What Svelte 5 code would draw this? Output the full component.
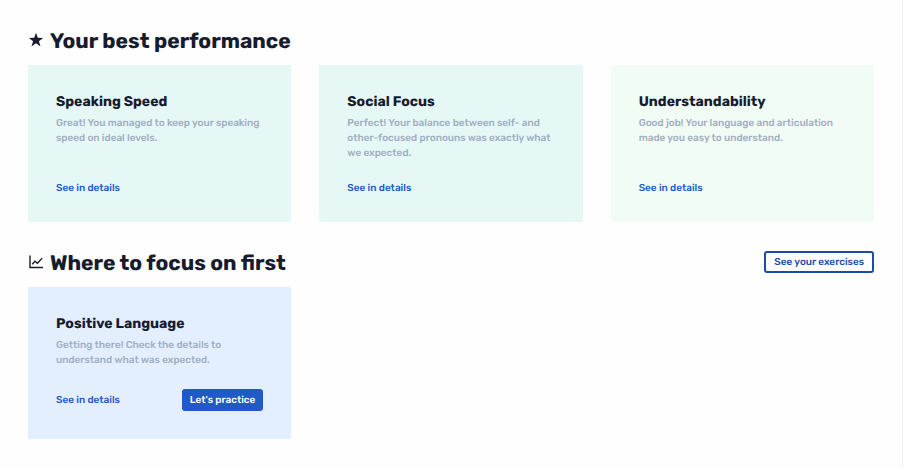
<script lang="ts">
	type Card = {
		title: string;
		text: string;
		tone: 'teal' | 'green' | 'blue';
		practice?: boolean;
	};

	const best: Card[] = [
		{
			title: 'Speaking Speed',
			text: 'Great! You managed to keep your speaking speed on ideal levels.',
			tone: 'teal'
		},
		{
			title: 'Social Focus',
			text: 'Perfect! Your balance between self- and other-focused pronouns was exactly what we expected.',
			tone: 'teal'
		},
		{
			title: 'Understandability',
			text: 'Good job! Your language and articulation made you easy to understand.',
			tone: 'green'
		}
	];

	const focus: Card[] = [
		{
			title: 'Positive Language',
			text: 'Getting there! Check the details to understand what was expected.',
			tone: 'blue',
			practice: true
		}
	];
</script>

{#snippet cards(items: Card[])}
	<div class="cards">
		{#each items as card}
			<article class="card {card.tone}">
				<h3>{card.title}</h3>
				<p>{card.text}</p>
				<div class="actions">
					<a href="#details">See in details</a>
					{#if card.practice}
						<button class="btn primary">Let's practice</button>
					{/if}
				</div>
			</article>
		{/each}
	</div>
{/snippet}

<main>
	<section>
		<header>
			<svg class="icon" viewBox="0 0 16 16" aria-hidden="true">
				<path
					fill="currentColor"
					d="M8 .7 9.8 5.8 15.2 5.9 10.9 9.2 12.5 14.4 8 11.3 3.5 14.4 5.1 9.2.8 5.9 6.2 5.8Z"
				/>
			</svg>
			<h2>Your best performance</h2>
		</header>
		{@render cards(best)}
	</section>

	<section>
		<header>
			<svg class="icon" viewBox="0 0 16 16" aria-hidden="true">
				<g fill="none" stroke="currentColor" stroke-width="1.4">
					<path d="M2 1.5v12h13" />
					<path d="M4.2 10.3 7 7.3l2.4 2 4.8-5.2" />
				</g>
			</svg>
			<h2>Where to focus on first</h2>
			<button class="btn outline">See your exercises</button>
		</header>
		{@render cards(focus)}
	</section>
</main>

<style>
	:global(body) {
		margin: 0;
		background: #fefefe;
	}

	main {
		box-sizing: border-box;
		min-height: 100vh;
		margin-right: 1px;
		padding: 28px;
		border-right: 1px solid #f1f2f4;
		display: flex;
		flex-direction: column;
		gap: 28px;
		font-family: Rubik, Roboto, sans-serif;
		text-rendering: geometricPrecision;
		color: #161c2d;
	}

	header {
		display: flex;
		align-items: center;
		height: 24px;
		margin-bottom: 13px;
	}

	.icon {
		width: 16px;
		height: 16px;
		margin-right: 6px;
	}

	h2 {
		margin: 0;
		padding-top: 4px;
		font-size: 21px;
		line-height: 24px;
		font-weight: 700;
		white-space: nowrap;
	}

	.cards {
		display: grid;
		grid-template-columns: repeat(3, 1fr);
		gap: 28px;
	}

	.card {
		display: flex;
		flex-direction: column;
		padding: 28px;
	}

	.teal {
		background: #e5f8f6;
	}

	.green {
		background: #f1fcf5;
	}

	.blue {
		background: #e3eeff;
	}

	h3 {
		margin: 0 0 5px;
		font-size: 14px;
		line-height: 18px;
		font-weight: 700;
	}

	p {
		margin: 0 0 21px;
		font-size: 10px;
		line-height: 15px;
		font-weight: 500;
		color: #a1aec1;
	}

	.actions {
		display: flex;
		align-items: center;
		justify-content: space-between;
		margin-top: auto;
	}

	a {
		font-size: 10px;
		line-height: 12px;
		font-weight: 500;
		color: #2159cb;
		text-decoration: none;
	}

	.btn {
		height: 22px;
		padding: 0 8px;
		border: 0;
		border-radius: 3px;
		font-family: inherit;
		font-size: 10px;
		font-weight: 500;
		text-rendering: inherit;
		white-space: nowrap;
		cursor: pointer;
	}

	.primary {
		background: #2159c9;
		color: #fff;
	}

	.outline {
		margin-left: auto;
		border: 2px solid #1d4ba8;
		background: #fff;
		color: #1d4ba8;
	}
</style>
